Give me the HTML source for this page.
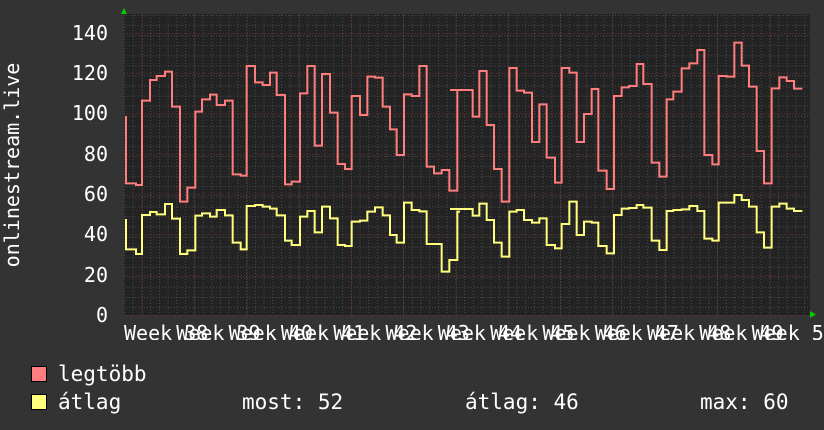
<!DOCTYPE html>
<html><head><meta charset="utf-8"><style>
html,body{margin:0;padding:0;background:#333;}
svg{display:block}
text{font-family:"DejaVu Sans Mono","Liberation Mono",monospace;fill:#fff;}
</style></head><body>
<svg width="824" height="430" viewBox="0 0 824 430" xmlns="http://www.w3.org/2000/svg">
<defs>
<pattern id="minx" x="124" y="0" width="8.72" height="430" patternUnits="userSpaceOnUse">
<line x1="0.5" y1="0" x2="0.5" y2="430" stroke="#4a4a4a" stroke-dasharray="1,2"/></pattern>
<pattern id="miny" x="0" y="5" width="824" height="10.07" patternUnits="userSpaceOnUse">
<line x1="0" y1="0.5" x2="824" y2="0.5" stroke="#4a4a4a" stroke-dasharray="1,2"/></pattern>
<clipPath id="pc"><rect x="124" y="0" width="700" height="340"/></clipPath>
</defs>
<rect width="824" height="430" fill="#333"/>
<rect x="124" y="14" width="686" height="301" fill="#232323"/>
<rect x="124" y="14" width="686" height="301" fill="url(#minx)"/>
<rect x="124" y="14" width="686" height="301" fill="url(#miny)"/>
<g stroke="#6a2f2f" stroke-dasharray="1,2">
<line x1="124" y1="315.5" x2="810" y2="315.5"/>
<line x1="124" y1="275.5" x2="810" y2="275.5"/>
<line x1="124" y1="234.5" x2="810" y2="234.5"/>
<line x1="124" y1="194.5" x2="810" y2="194.5"/>
<line x1="124" y1="154.5" x2="810" y2="154.5"/>
<line x1="124" y1="113.5" x2="810" y2="113.5"/>
<line x1="124" y1="73.5" x2="810" y2="73.5"/>
<line x1="124" y1="33.5" x2="810" y2="33.5"/>
<line x1="142.5" y1="14" x2="142.5" y2="318"/>
<line x1="194.5" y1="14" x2="194.5" y2="318"/>
<line x1="247.5" y1="14" x2="247.5" y2="318"/>
<line x1="299.5" y1="14" x2="299.5" y2="318"/>
<line x1="351.5" y1="14" x2="351.5" y2="318"/>
<line x1="403.5" y1="14" x2="403.5" y2="318"/>
<line x1="456.5" y1="14" x2="456.5" y2="318"/>
<line x1="508.5" y1="14" x2="508.5" y2="318"/>
<line x1="560.5" y1="14" x2="560.5" y2="318"/>
<line x1="612.5" y1="14" x2="612.5" y2="318"/>
<line x1="665.5" y1="14" x2="665.5" y2="318"/>
<line x1="717.5" y1="14" x2="717.5" y2="318"/>
<line x1="770.5" y1="14" x2="770.5" y2="318"/>
</g>
<polygon points="121,14 127,14 124,8" fill="#0c0"/>
<polygon points="810,311 810,318 816,314.5" fill="#0c0"/>
<g transform="translate(110,0) scale(0.33333)" fill="none" stroke-width="6" stroke-linejoin="miter">
<path stroke="#ff7d7d" d="M48,348 V550 H78 V555 H96 V302 H120 V240 H140 V228 H165 V215 H186 V320 H210 V605 H232 V563 H256 V335 H276 V298 H300 V284 H320 V315 H345 V302 H368 V523 H392 V527 H410 V198 H435 V247 H458 V255 H480 V218 H500 V285 H525 V553 H545 V545 H570 V280 H592 V198 H614 V437 H636 V222 H660 V338 H683 V492 H705 V507 H725 V288 H750 V345 H772 V230 H795 V233 H818 V320 H840 V388 H860 V465 H882 V283 H905 V288 H928 V198 H950 V500 H972 V520 H995 V510 H1018 V572 H1042 V270 H1050"/>
<path stroke="#ffff7d" d="M48,657 V748 H78 V762 H96 V645 H120 V636 H140 V643 H165 V612 H186 V656 H210 V762 H232 V751 H256 V647 H276 V640 H300 V650 H320 V630 H345 V646 H368 V728 H392 V748 H410 V618 H435 V615 H458 V620 H480 V626 H500 V646 H525 V722 H545 V735 H570 V650 H592 V633 H614 V697 H636 V620 H660 V655 H683 V735 H705 V738 H725 V665 H750 V662 H772 V635 H795 V622 H818 V646 H840 V705 H860 V728 H882 V608 H905 V630 H928 V634 H950 V732 H995 V815 H1018 V780 H1042 V635 H1050"/>
</g>
<g transform="translate(460,0) scale(0.33333)" fill="none" stroke-width="6">
<path stroke="#ff7d7d" d="M-30,270 H38 V350 H58 V213 H80 V375 H102 V507 H125 V605 H148 V204 H170 V272 H192 V278 H216 V426 H238 V313 H260 V473 H285 V548 H305 V204 H328 V218 H350 V426 H372 V342 H395 V267 H415 V512 H440 V567 H462 V288 H485 V262 H507 V258 H530 V192 H550 V252 H575 V488 H598 V530 H620 V298 H640 V275 H665 V205 H688 V190 H712 V150 H733 V465 H757 V493 H776 V228 H800 V230 H823 V128 H845 V197 H867 V260 H890 V453 H912 V550 H935 V265 H958 V232 H980 V243 H1002 V266 H1027"/>
<path stroke="#ffff7d" d="M-30,627 H15 V627 H38 V647 H58 V611 H80 V660 H102 V728 H125 V770 H148 V635 H170 V630 H192 V660 H216 V668 H238 V655 H260 V735 H285 V745 H305 V672 H328 V605 H350 V705 H372 V665 H395 V668 H415 V738 H440 V760 H462 V645 H485 V626 H507 V624 H530 V615 H550 V623 H575 V722 H598 V750 H620 V633 H640 V630 H665 V628 H688 V618 H712 V633 H733 V716 H757 V722 H776 V608 H823 V585 H845 V600 H867 V620 H890 V697 H912 V743 H935 V620 H958 V611 H980 V626 H1002 V633 H1027"/>
</g>
<g font-size="20" text-anchor="end">
<text x="108" y="322">0</text>
<text x="108" y="282">20</text>
<text x="108" y="241">40</text>
<text x="108" y="201">60</text>
<text x="108" y="161">80</text>
<text x="108" y="120">100</text>
<text x="108" y="80">120</text>
<text x="108" y="40">140</text>
</g>
<text font-size="20" transform="translate(19,165) rotate(-90)" text-anchor="middle">onlinestream.live</text>
<g font-size="20" clip-path="url(#pc)">
<text x="124" y="340">Week 38</text>
<text x="176.3" y="340">Week 39</text>
<text x="228.6" y="340">Week 40</text>
<text x="280.9" y="340">Week 41</text>
<text x="333.2" y="340">Week 42</text>
<text x="385.5" y="340">Week 43</text>
<text x="437.8" y="340">Week 44</text>
<text x="490.1" y="340">Week 45</text>
<text x="542.4" y="340">Week 46</text>
<text x="594.7" y="340">Week 47</text>
<text x="647" y="340">Week 48</text>
<text x="699.3" y="340">Week 49</text>
<text x="751.6" y="340">Week 50</text>
</g>
<rect x="31.5" y="366.5" width="15" height="15" fill="#ff7d7d" stroke="#000"/>
<rect x="31.5" y="394.5" width="15" height="15" fill="#ffff7d" stroke="#000"/>
<g font-size="21">
<text x="58" y="381">legtöbb</text>
<text x="58" y="409">átlag</text>
<text x="242" y="409">most: 52</text>
<text x="465" y="409">átlag: 46</text>
<text x="700" y="409">max: 60</text>
</g>
</svg>
</body></html>
